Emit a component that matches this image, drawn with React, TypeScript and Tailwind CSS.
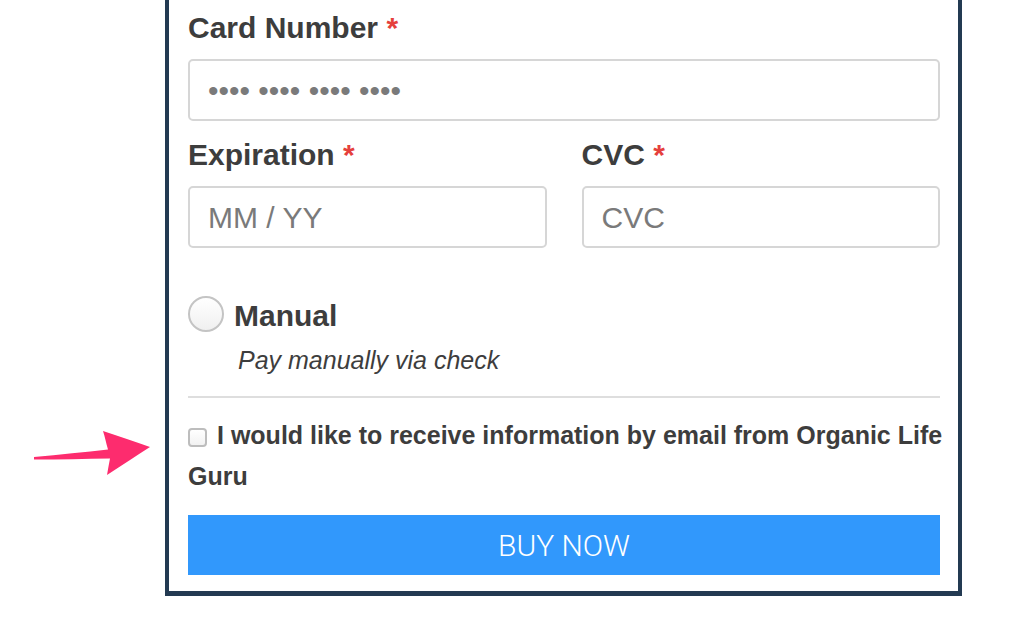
const font = { fontFamily: '"Liberation Sans", Arial, sans-serif' };

const Label = ({ text }: { text: string }) => (
  <div className="text-[30px] leading-[36px] font-bold text-[#3d3d3d]">
    {text} <span className="text-[#e5403c]">*</span>
  </div>
);

const Field = ({ placeholder }: { placeholder: string }) => (
  <div className="mt-[13px] h-[62px] rounded-[5px] border-2 border-[#d6d6d6] bg-white pl-[18px] flex items-center text-[30px] text-[#7a7a7a]">
    {placeholder}
  </div>
);

export default function App() {
  return (
    <div className="relative w-[1024px] h-[620px] bg-white overflow-hidden" style={font}>
      <div className="ml-[165px] w-[797px] border-x-4 border-b-[5px] border-[#233a52] bg-white pt-[10px] pl-[19px] pr-[18px] pb-[16px]">
        <Label text="Card Number" />
        <Field placeholder="•••• •••• •••• ••••" />

        <div className="mt-[16px] grid grid-cols-2 gap-[35px]">
          <div>
            <Label text="Expiration" />
            <Field placeholder="MM / YY" />
          </div>
          <div>
            <Label text="CVC" />
            <Field placeholder="CVC" />
          </div>
        </div>

        <div className="mt-[46px] flex items-center gap-[10px]">
          <span className="w-[36px] h-[36px] rounded-full border-2 border-[#c4c4c4] bg-gradient-to-b from-white to-[#f0f0f0]" />
          <span className="text-[30px] leading-[36px] font-bold text-[#3d3d3d] pt-[4px]">Manual</span>
        </div>
        <div className="mt-[11px] pl-[50px] text-[25px] leading-[30px] italic text-[#3d3d3d]">
          Pay manually via check
        </div>

        <div className="mt-[21px] h-[2px] bg-[#dedede]" />

        <div className="mt-[17px] text-[25px] leading-[41px] font-bold text-[#3d3d3d]">
          <span className="whitespace-nowrap">
            <span className="inline-block w-[19px] h-[19px] align-[-3px] mr-[10px] rounded-[4px] border-2 border-[#bdbdbd] bg-gradient-to-b from-white to-[#f2f2f2]" />
            I would like to receive information by email from Organic Life
          </span>
          <br />
          Guru
        </div>

        <button
          className="mt-[18px] w-full h-[60px] bg-[#3198fc] text-white text-[30px] font-light"
          style={{ fontFamily: 'Roboto, "Liberation Sans", sans-serif' }}
        >
          BUY NOW
        </button>
      </div>

      <svg className="absolute left-0 top-[420px]" width="160" height="70" viewBox="0 420 160 70">
        <path
          d="M34 457 C60 454.5 85 452 108 449.5 C106 443 105 437 103 431 C119 436 135 442 150 447 C136 456 122 465 107 475 C108 469 109 464 110 458.5 C85 459 60 459.5 34 459.5 Z"
          fill="#fd2c6e"
        />
      </svg>
    </div>
  );
}
